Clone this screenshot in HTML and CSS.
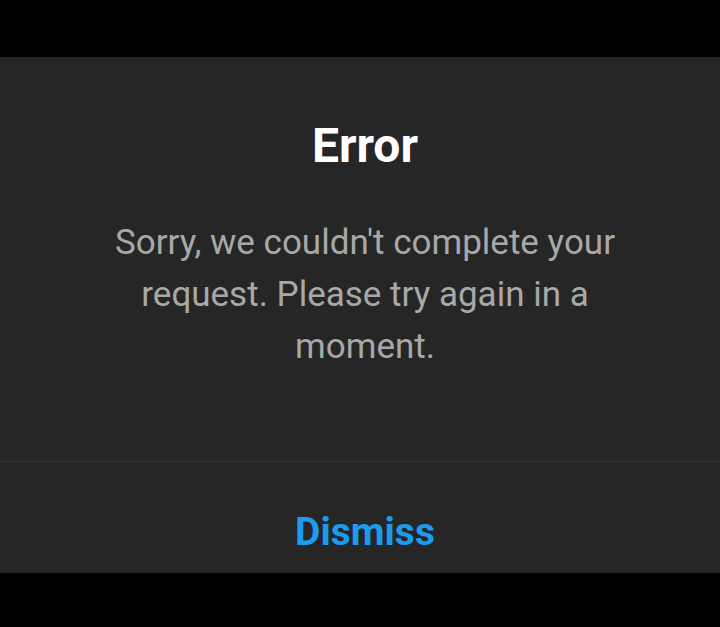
FILE: index.html
```html
<!DOCTYPE html>
<html lang="en">
<head>
  <meta charset="UTF-8">
  <title>Error</title>
  <link rel="stylesheet" href="styles.css">
</head>
<body>
  <div class="dialog" role="alertdialog">
    <div class="dialog-body">
      <h1 class="dialog-title">Error</h1>
      <p class="dialog-text">Sorry, we couldn't complete your request. Please try again in a moment.</p>
    </div>
    <div class="dialog-actions">
      <button class="dismiss-btn" id="dismissBtn">Dismiss</button>
    </div>
  </div>
</body>
</html>
```

FILE: styles.css
```css
body {
  margin: 0;
  padding: 57px 0 54px;
  background: #000;
  font-family: Roboto, "Liberation Sans", sans-serif;
}

.dialog {
  background: #262626;
  height: 516px;
  display: flex;
  flex-direction: column;
}

/* content sits slightly right of the window centre */
.dialog-body {
  padding: 61px 95px 0 105px;
  height: 405px;
  box-sizing: border-box;
  text-align: center;
  border-bottom: 1px solid #363636;
}

.dialog-title {
  margin: 0;
  font-size: 48px;
  line-height: 56px;
  font-weight: 700;
  color: #fff;
}

.dialog-text {
  margin: 43px 0 0;
  font-size: 35px;
  line-height: 52px;
  color: #a8a8a8;
}

.dialog-actions {
  display: flex;
  justify-content: center;
  padding: 46px 0 0 10px;
}

.dismiss-btn {
  border: none;
  background: none;
  padding: 0;
  font-family: inherit;
  font-size: 39px;
  line-height: 48px;
  font-weight: 700;
  color: #1d9bf0;
  cursor: pointer;
}
```
